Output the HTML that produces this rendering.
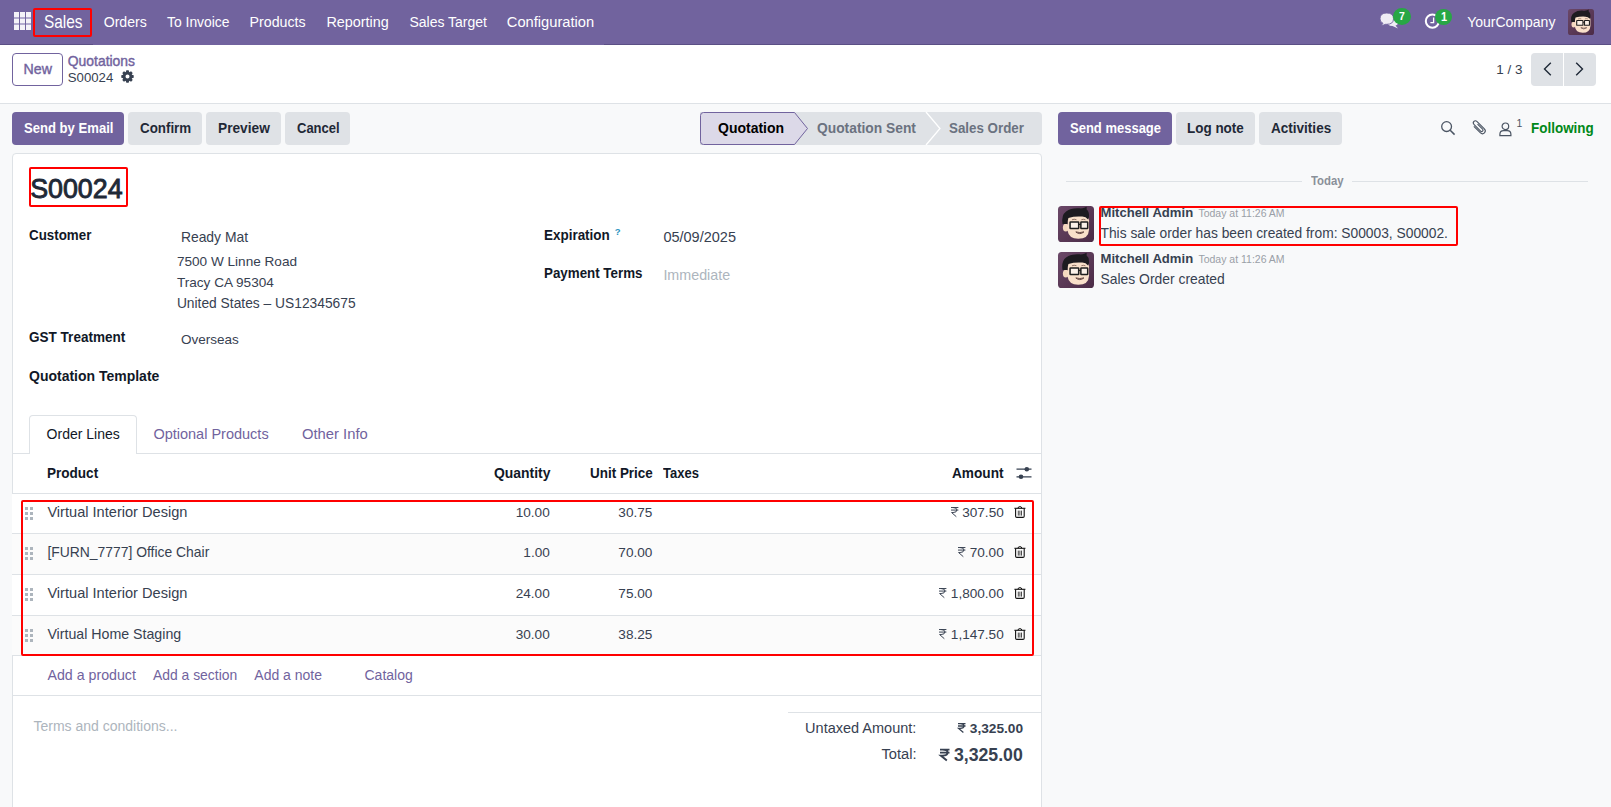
<!DOCTYPE html>
<html><head><meta charset="utf-8"><style>
html,body{margin:0;padding:0;width:1611px;height:807px;overflow:hidden;background:#f8f9fa}
body{position:relative;font-family:"Liberation Sans",sans-serif}
.t{position:absolute;white-space:nowrap}
.b{position:absolute}
svg{position:absolute;overflow:visible}
</style></head><body>
<div class="b" style="left:0px;top:0px;width:1611px;height:45px;background:#71639e"></div>
<div class="b" style="left:0px;top:44px;width:93px;height:1px;background:#5b4f85"></div>
<div class="b" style="left:604px;top:44px;width:1007px;height:1px;background:#5b4f85"></div>
<div class="b" style="left:0px;top:45px;width:1611px;height:58px;background:#fff"></div>
<div class="b" style="left:0px;top:103px;width:1611px;height:1px;background:#dee2e6"></div>
<div class="b" style="left:0px;top:104px;width:1611px;height:703px;background:#f8f9fa"></div>
<div class="b" style="left:12px;top:153px;width:1030px;height:700px;background:#fff;border:1px solid #dee2e6;border-radius:4px;box-sizing:border-box"></div>
<div class="b" style="left:14px;top:12px;width:5px;height:18px;background:#b3abcf"></div>
<div class="b" style="left:14px;top:12px;width:5px;height:5px;background:#f4f2f8"></div>
<div class="b" style="left:14px;top:18.6px;width:5px;height:4.8px;background:#f4f2f8"></div>
<div class="b" style="left:14px;top:24.8px;width:5px;height:5px;background:#f4f2f8"></div>
<div class="b" style="left:20px;top:12px;width:5px;height:18px;background:#b3abcf"></div>
<div class="b" style="left:20px;top:12px;width:5px;height:5px;background:#f4f2f8"></div>
<div class="b" style="left:20px;top:18.6px;width:5px;height:4.8px;background:#f4f2f8"></div>
<div class="b" style="left:20px;top:24.8px;width:5px;height:5px;background:#f4f2f8"></div>
<div class="b" style="left:26px;top:12px;width:5px;height:18px;background:#b3abcf"></div>
<div class="b" style="left:26px;top:12px;width:5px;height:5px;background:#f4f2f8"></div>
<div class="b" style="left:26px;top:18.6px;width:5px;height:4.8px;background:#f4f2f8"></div>
<div class="b" style="left:26px;top:24.8px;width:5px;height:5px;background:#f4f2f8"></div>
<div class="b" style="left:33px;top:8px;width:59px;height:29px;border:2px solid #ff0000;border-radius:2px;box-sizing:border-box"></div>
<div class="t" style="left:43.50px;top:9.80px;font-size:18.5px;line-height:23px;font-weight:400;color:#ffffff;transform:scaleX(0.8333);transform-origin:0 0;">Sales</div>
<div class="t" style="left:103.70px;top:12.70px;font-size:14.1px;line-height:18px;font-weight:400;color:#ffffff;">Orders</div>
<div class="t" style="left:167.00px;top:13.70px;font-size:13.9px;line-height:17px;font-weight:400;color:#ffffff;">To Invoice</div>
<div class="t" style="left:249.60px;top:12.70px;font-size:14.2px;line-height:18px;font-weight:400;color:#ffffff;">Products</div>
<div class="t" style="left:326.40px;top:12.70px;font-size:14.4px;line-height:18px;font-weight:400;color:#ffffff;">Reporting</div>
<div class="t" style="left:409.40px;top:12.60px;font-size:14.0px;line-height:18px;font-weight:400;color:#ffffff;">Sales Target</div>
<div class="t" style="left:506.80px;top:12.60px;font-size:14.7px;line-height:18px;font-weight:400;color:#ffffff;">Configuration</div>
<div class="t" style="left:1467.20px;top:12.90px;font-size:14.0px;line-height:18px;font-weight:400;color:#ffffff;">YourCompany</div>
<svg style="left:1376px;top:8px" width="26" height="24" viewBox="0 0 26 24"><path d="M11 13 Q11 9.5 16.5 9.5 Q22.5 9.5 22.5 13.5 Q22.5 16.5 19.5 17.5 L22 20.5 L16.5 18 Q11 18 11 13Z" fill="#efedf4"/><path d="M4 10.8 Q4 5 10.8 5 Q17.5 5 17.5 10.8 Q17.5 16.3 10.8 16.3 L9.5 16.3 L5 18 L7 15.3 Q4 14 4 10.8Z" fill="#efedf4" stroke="#71639e" stroke-width="0.9"/></svg>
<div class="b" style="left:1392.6px;top:7.7px;width:18.8px;height:17.4px;background:#28a745;border-radius:9.4px/8.7px"></div>
<div class="t" style="left:1399.00px;top:9.10px;font-size:11.5px;line-height:14px;font-weight:700;color:#ffffff;transform:scaleX(0.9091);transform-origin:0 0;">7</div>
<svg style="left:1422px;top:11px" width="20" height="20" viewBox="0 0 20 20"><circle cx="10.4" cy="10.1" r="6.6" fill="none" stroke="#fff" stroke-width="2"/><path d="M11.6 6.6 V11.6 H8.4" fill="none" stroke="#fff" stroke-width="1.3"/></svg>
<div class="b" style="left:1435.1px;top:9px;width:17.1px;height:16.4px;background:#28a745;border-radius:8.6px/8.2px"></div>
<div class="t" style="left:1441.30px;top:9.60px;font-size:12.1px;line-height:15px;font-weight:700;color:#ffffff;transform:scaleX(0.9091);transform-origin:0 0;">1</div>
<div class="b" style="left:12px;top:53px;width:51px;height:33px;border:1px solid #71639e;border-radius:4px;box-sizing:border-box;background:#fff"></div>
<div class="t" style="left:23.50px;top:59.60px;font-size:14.2px;line-height:18px;font-weight:400;color:#71639e;-webkit-text-stroke:0.4px #71639e;">New</div>
<div class="t" style="left:67.80px;top:53.00px;font-size:13.9px;line-height:17px;font-weight:400;color:#71639e;-webkit-text-stroke:0.4px #71639e;">Quotations</div>
<div class="t" style="left:67.80px;top:69.80px;font-size:13.2px;line-height:16px;font-weight:400;color:#374151;">S00024</div>
<svg style="left:120.6px;top:70.3px" width="13" height="13" viewBox="0 0 13 13"><path fill-rule="evenodd" fill="#374151" d="M10.88 4.79 L12.70 5.36 L12.70 7.64 L10.88 8.21 L10.80 8.39 L11.69 10.07 L10.07 11.69 L8.39 10.80 L8.21 10.88 L7.64 12.70 L5.36 12.70 L4.79 10.88 L4.61 10.80 L2.93 11.69 L1.31 10.07 L2.20 8.39 L2.12 8.21 L0.30 7.64 L0.30 5.36 L2.12 4.79 L2.20 4.61 L1.31 2.93 L2.93 1.31 L4.61 2.20 L4.79 2.12 L5.36 0.30 L7.64 0.30 L8.21 2.12 L8.39 2.20 L10.07 1.31 L11.69 2.93 L10.80 4.61Z M8.50 6.50 A2.0 2.0 0 1 0 4.50 6.50 A2.0 2.0 0 1 0 8.50 6.50Z"/></svg>
<div class="t" style="left:1496.30px;top:61.00px;font-size:13.4px;line-height:17px;font-weight:400;color:#374151;">1 / 3</div>
<div class="b" style="left:1531px;top:53px;width:32px;height:33px;background:#dfe2e6;border-radius:4px 0 0 4px"></div>
<div class="b" style="left:1564px;top:53px;width:32px;height:33px;background:#dfe2e6;border-radius:0 4px 4px 0"></div>
<svg style="left:1543px;top:62px" width="9" height="14" viewBox="0 0 9 14"><path d="M7.8 0.8 L1.5 7 L7.8 13.2" fill="none" stroke="#1f2937" stroke-width="1.4"/></svg>
<svg style="left:1575px;top:62px" width="9" height="14" viewBox="0 0 9 14"><path d="M1.2 0.8 L7.5 7 L1.2 13.2" fill="none" stroke="#1f2937" stroke-width="1.4"/></svg>
<div class="b" style="left:12px;top:112px;width:112px;height:33px;background:#71639e;border-radius:4px"></div>
<div class="t" style="left:23.50px;top:119.10px;font-size:14.4px;line-height:18px;font-weight:700;color:#ffffff;transform:scaleX(0.9091);transform-origin:0 0;">Send by Email</div>
<div class="b" style="left:128px;top:112px;width:74px;height:33px;background:#dfe2e6;border-radius:4px"></div>
<div class="t" style="left:139.70px;top:119.10px;font-size:14.7px;line-height:18px;font-weight:700;color:#1f2937;transform:scaleX(0.9091);transform-origin:0 0;">Confirm</div>
<div class="b" style="left:206px;top:112px;width:75px;height:33px;background:#dfe2e6;border-radius:4px"></div>
<div class="t" style="left:217.90px;top:118.10px;font-size:15.1px;line-height:19px;font-weight:700;color:#1f2937;transform:scaleX(0.9091);transform-origin:0 0;">Preview</div>
<div class="b" style="left:285px;top:112px;width:65px;height:33px;background:#dfe2e6;border-radius:4px"></div>
<div class="t" style="left:296.50px;top:119.10px;font-size:14.3px;line-height:18px;font-weight:700;color:#1f2937;transform:scaleX(0.9091);transform-origin:0 0;">Cancel</div>
<svg style="left:700px;top:112px" width="342" height="33" viewBox="0 0 342 33"><path d="M0 0 H338 Q342 0 342 4 V29 Q342 33 338 33 H0Z" fill="#dfe2e6"/><path d="M0.5 3.5 Q0.5 0.5 3.5 0.5 H94.5 L107.5 16.5 L94.5 32.5 H3.5 Q0.5 32.5 0.5 29.5Z" fill="#dcd9e8" stroke="#71639e" stroke-width="1"/><path d="M226 0 L240 16.5 L226 33" fill="none" stroke="#fff" stroke-width="1.3"/></svg>
<div class="t" style="left:717.70px;top:117.50px;font-size:15.4px;line-height:19px;font-weight:700;color:#000;transform:scaleX(0.9091);transform-origin:0 0;">Quotation</div>
<div class="t" style="left:817.00px;top:117.50px;font-size:15.2px;line-height:19px;font-weight:700;color:#6b7280;transform:scaleX(0.9091);transform-origin:0 0;">Quotation Sent</div>
<div class="t" style="left:949.00px;top:118.50px;font-size:14.7px;line-height:18px;font-weight:700;color:#6b7280;transform:scaleX(0.9091);transform-origin:0 0;">Sales Order</div>
<div class="b" style="left:1058px;top:112px;width:114px;height:33px;background:#71639e;border-radius:4px"></div>
<div class="t" style="left:1069.60px;top:119.10px;font-size:14.3px;line-height:18px;font-weight:700;color:#ffffff;transform:scaleX(0.9091);transform-origin:0 0;">Send message</div>
<div class="b" style="left:1176px;top:112px;width:79px;height:33px;background:#dfe2e6;border-radius:4px"></div>
<div class="t" style="left:1187.40px;top:119.10px;font-size:14.8px;line-height:18px;font-weight:700;color:#1f2937;transform:scaleX(0.9091);transform-origin:0 0;">Log note</div>
<div class="b" style="left:1259px;top:112px;width:83px;height:33px;background:#dfe2e6;border-radius:4px"></div>
<div class="t" style="left:1271.00px;top:119.10px;font-size:14.9px;line-height:19px;font-weight:700;color:#1f2937;transform:scaleX(0.9091);transform-origin:0 0;">Activities</div>
<svg style="left:1440px;top:120px" width="16" height="16" viewBox="0 0 16 16"><circle cx="6.6" cy="6.6" r="4.9" fill="none" stroke="#4b5563" stroke-width="1.3"/><path d="M10.2 10.2 L14.6 14.6" stroke="#4b5563" stroke-width="1.5"/></svg>
<svg style="left:1470px;top:118px" width="18" height="19" viewBox="0 0 18 19"><g transform="rotate(-45 9 9.5)"><path d="M6.2 5 V14 Q6.2 17.2 9 17.2 Q11.8 17.2 11.8 14 V4 Q11.8 1.6 9.6 1.6 Q7.6 1.6 7.6 4 V13.2 Q7.6 14.6 9 14.6 Q10.4 14.6 10.4 13.2 V6" fill="none" stroke="#4b5563" stroke-width="1.1"/></g></svg>
<svg style="left:1499px;top:122px" width="14" height="15" viewBox="0 0 14 15"><circle cx="6.4" cy="4.3" r="3.3" fill="none" stroke="#4b5563" stroke-width="1.2"/><path d="M0.9 13.6 V12.3 Q0.9 8.6 4.6 8.6 H8.2 Q11.9 8.6 11.9 12.3 V13.6 Z" fill="none" stroke="#4b5563" stroke-width="1.2"/></svg>
<div class="t" style="left:1516.40px;top:116.90px;font-size:10.5px;line-height:13px;font-weight:400;color:#4b5563;">1</div>
<div class="t" style="left:1531.40px;top:119.10px;font-size:14.8px;line-height:18px;font-weight:700;color:#008818;transform:scaleX(0.9091);transform-origin:0 0;">Following</div>
<div class="b" style="left:29px;top:167px;width:99px;height:40px;border:2px solid #ff0000;border-radius:2px;box-sizing:border-box"></div>
<div class="t" style="left:30.20px;top:171.50px;font-size:26.8px;line-height:34px;font-weight:400;color:#1f2937;-webkit-text-stroke:0.9px #1f2937;">S00024</div>
<div class="t" style="left:29.40px;top:226.00px;font-size:14.7px;line-height:18px;font-weight:700;color:#111827;transform:scaleX(0.9091);transform-origin:0 0;">Customer</div>
<div class="t" style="left:180.90px;top:229.30px;font-size:13.9px;line-height:17px;font-weight:400;color:#374151;">Ready Mat</div>
<div class="t" style="left:176.90px;top:252.80px;font-size:13.6px;line-height:17px;font-weight:400;color:#374151;">7500 W Linne Road</div>
<div class="t" style="left:176.90px;top:274.00px;font-size:13.6px;line-height:17px;font-weight:400;color:#374151;">Tracy CA 95304</div>
<div class="t" style="left:176.90px;top:294.60px;font-size:13.8px;line-height:17px;font-weight:400;color:#374151;">United States – US12345675</div>
<div class="t" style="left:29.40px;top:327.80px;font-size:14.9px;line-height:19px;font-weight:700;color:#111827;transform:scaleX(0.9091);transform-origin:0 0;">GST Treatment</div>
<div class="t" style="left:180.90px;top:330.60px;font-size:13.5px;line-height:17px;font-weight:400;color:#374151;">Overseas</div>
<div class="t" style="left:29.40px;top:365.90px;font-size:15.4px;line-height:19px;font-weight:700;color:#111827;transform:scaleX(0.9091);transform-origin:0 0;">Quotation Template</div>
<div class="t" style="left:543.60px;top:225.70px;font-size:14.8px;line-height:18px;font-weight:700;color:#111827;transform:scaleX(0.9091);transform-origin:0 0;">Expiration</div>
<div class="t" style="left:614.70px;top:225.90px;font-size:9.5px;line-height:12px;font-weight:700;color:#2a93c0;">?</div>
<div class="t" style="left:663.40px;top:228.00px;font-size:14.5px;line-height:18px;font-weight:400;color:#374151;">05/09/2025</div>
<div class="t" style="left:543.60px;top:264.40px;font-size:14.7px;line-height:18px;font-weight:700;color:#111827;transform:scaleX(0.9091);transform-origin:0 0;">Payment Terms</div>
<div class="t" style="left:663.40px;top:266.30px;font-size:14.3px;line-height:18px;font-weight:400;color:#adb5bd;">Immediate</div>
<div class="b" style="left:12px;top:453px;width:1029px;height:1px;background:#dee2e6"></div>
<div class="b" style="left:29px;top:415px;width:108px;height:39px;background:#fff;border:1px solid #dee2e6;border-bottom:none;border-radius:4px 4px 0 0;box-sizing:border-box"></div>
<div class="t" style="left:46.60px;top:425.20px;font-size:14.0px;line-height:18px;font-weight:400;color:#111827;">Order Lines</div>
<div class="t" style="left:153.40px;top:425.20px;font-size:14.5px;line-height:18px;font-weight:400;color:#71639e;">Optional Products</div>
<div class="t" style="left:302.00px;top:425.20px;font-size:14.8px;line-height:18px;font-weight:400;color:#71639e;">Other Info</div>
<div class="t" style="left:47.30px;top:463.60px;font-size:14.9px;line-height:19px;font-weight:700;color:#111827;transform:scaleX(0.9091);transform-origin:0 0;">Product</div>
<div class="t" style="left:493.50px;top:462.60px;font-size:15.3px;line-height:19px;font-weight:700;color:#111827;transform:scaleX(0.9091);transform-origin:0 0;">Quantity</div>
<div class="t" style="left:589.50px;top:463.60px;font-size:14.8px;line-height:18px;font-weight:700;color:#111827;transform:scaleX(0.9091);transform-origin:0 0;">Unit Price</div>
<div class="t" style="left:662.80px;top:463.60px;font-size:14.3px;line-height:18px;font-weight:700;color:#111827;transform:scaleX(0.9091);transform-origin:0 0;">Taxes</div>
<div class="t" style="left:952.20px;top:462.70px;font-size:15.0px;line-height:19px;font-weight:700;color:#111827;transform:scaleX(0.9091);transform-origin:0 0;">Amount</div>
<svg style="left:1016px;top:466px" width="16" height="14" viewBox="0 0 16 14"><path d="M0.5 3.2 H15.5 M0.5 10.8 H15.5" stroke="#374151" stroke-width="1.2"/><circle cx="10.8" cy="3.2" r="2.3" fill="#374151"/><circle cx="5" cy="10.8" r="2.3" fill="#374151"/></svg>
<div class="b" style="left:12px;top:493px;width:1029px;height:1px;background:#dee2e6"></div>
<div class="b" style="left:12px;top:494px;width:1029px;height:39px;background:#fff"></div>
<div class="b" style="left:12px;top:533px;width:1029px;height:1px;background:#dee2e6"></div>
<div class="b" style="left:25px;top:506.79999999999995px;width:3px;height:3px;background:#adb5bd"></div>
<div class="b" style="left:25px;top:511.79999999999995px;width:3px;height:3px;background:#adb5bd"></div>
<div class="b" style="left:25px;top:516.8px;width:3px;height:3px;background:#adb5bd"></div>
<div class="b" style="left:30px;top:506.79999999999995px;width:3px;height:3px;background:#adb5bd"></div>
<div class="b" style="left:30px;top:511.79999999999995px;width:3px;height:3px;background:#adb5bd"></div>
<div class="b" style="left:30px;top:516.8px;width:3px;height:3px;background:#adb5bd"></div>
<div class="t" style="left:47.40px;top:502.80px;font-size:14.6px;line-height:18px;font-weight:400;color:#374151;">Virtual Interior Design</div>
<div class="t" style="left:515.73px;top:503.80px;font-size:13.6px;line-height:17px;font-weight:400;color:#374151;">10.00</div>
<div class="t" style="left:618.33px;top:503.80px;font-size:13.6px;line-height:17px;font-weight:400;color:#374151;">30.75</div>
<div class="t" style="left:962.18px;top:503.80px;font-size:13.6px;line-height:17px;font-weight:400;color:#374151;">307.50</div>
<svg style="left:1013.5px;top:505.99999999999994px" width="12" height="12" viewBox="0 0 12 12"><path d="M0.4 2.3 H11.4" stroke="#111" stroke-width="1.1"/><path d="M4 2.2 Q4 0.6 5.9 0.6 Q7.8 0.6 7.8 2.2" fill="none" stroke="#111" stroke-width="1"/><path d="M1.6 2.6 V10.2 Q1.6 11.4 2.8 11.4 H9 Q10.2 11.4 10.2 10.2 V2.6" fill="none" stroke="#111" stroke-width="1.1"/><path d="M4.3 4.6 V9.6 M5.9 4.6 V9.6 M7.5 4.6 V9.6" stroke="#111" stroke-width="0.75"/></svg>
<div class="b" style="left:12px;top:534px;width:1029px;height:40px;background:#fbfbfb"></div>
<div class="b" style="left:12px;top:574px;width:1029px;height:1px;background:#dee2e6"></div>
<div class="b" style="left:25px;top:546.5px;width:3px;height:3px;background:#adb5bd"></div>
<div class="b" style="left:25px;top:551.5px;width:3px;height:3px;background:#adb5bd"></div>
<div class="b" style="left:25px;top:556.5px;width:3px;height:3px;background:#adb5bd"></div>
<div class="b" style="left:30px;top:546.5px;width:3px;height:3px;background:#adb5bd"></div>
<div class="b" style="left:30px;top:551.5px;width:3px;height:3px;background:#adb5bd"></div>
<div class="b" style="left:30px;top:556.5px;width:3px;height:3px;background:#adb5bd"></div>
<div class="t" style="left:47.40px;top:543.50px;font-size:13.9px;line-height:17px;font-weight:400;color:#374151;">[FURN_7777] Office Chair</div>
<div class="t" style="left:523.35px;top:543.50px;font-size:13.6px;line-height:17px;font-weight:400;color:#374151;">1.00</div>
<div class="t" style="left:618.33px;top:543.50px;font-size:13.6px;line-height:17px;font-weight:400;color:#374151;">70.00</div>
<div class="t" style="left:969.73px;top:543.50px;font-size:13.6px;line-height:17px;font-weight:400;color:#374151;">70.00</div>
<svg style="left:1013.5px;top:545.7px" width="12" height="12" viewBox="0 0 12 12"><path d="M0.4 2.3 H11.4" stroke="#111" stroke-width="1.1"/><path d="M4 2.2 Q4 0.6 5.9 0.6 Q7.8 0.6 7.8 2.2" fill="none" stroke="#111" stroke-width="1"/><path d="M1.6 2.6 V10.2 Q1.6 11.4 2.8 11.4 H9 Q10.2 11.4 10.2 10.2 V2.6" fill="none" stroke="#111" stroke-width="1.1"/><path d="M4.3 4.6 V9.6 M5.9 4.6 V9.6 M7.5 4.6 V9.6" stroke="#111" stroke-width="0.75"/></svg>
<div class="b" style="left:12px;top:575px;width:1029px;height:40px;background:#fff"></div>
<div class="b" style="left:12px;top:615px;width:1029px;height:1px;background:#dee2e6"></div>
<div class="b" style="left:25px;top:587.5px;width:3px;height:3px;background:#adb5bd"></div>
<div class="b" style="left:25px;top:592.5px;width:3px;height:3px;background:#adb5bd"></div>
<div class="b" style="left:25px;top:597.5px;width:3px;height:3px;background:#adb5bd"></div>
<div class="b" style="left:30px;top:587.5px;width:3px;height:3px;background:#adb5bd"></div>
<div class="b" style="left:30px;top:592.5px;width:3px;height:3px;background:#adb5bd"></div>
<div class="b" style="left:30px;top:597.5px;width:3px;height:3px;background:#adb5bd"></div>
<div class="t" style="left:47.40px;top:583.50px;font-size:14.6px;line-height:18px;font-weight:400;color:#374151;">Virtual Interior Design</div>
<div class="t" style="left:515.73px;top:584.50px;font-size:13.6px;line-height:17px;font-weight:400;color:#374151;">24.00</div>
<div class="t" style="left:618.33px;top:584.50px;font-size:13.6px;line-height:17px;font-weight:400;color:#374151;">75.00</div>
<div class="t" style="left:950.83px;top:584.50px;font-size:13.6px;line-height:17px;font-weight:400;color:#374151;">1,800.00</div>
<svg style="left:1013.5px;top:586.7px" width="12" height="12" viewBox="0 0 12 12"><path d="M0.4 2.3 H11.4" stroke="#111" stroke-width="1.1"/><path d="M4 2.2 Q4 0.6 5.9 0.6 Q7.8 0.6 7.8 2.2" fill="none" stroke="#111" stroke-width="1"/><path d="M1.6 2.6 V10.2 Q1.6 11.4 2.8 11.4 H9 Q10.2 11.4 10.2 10.2 V2.6" fill="none" stroke="#111" stroke-width="1.1"/><path d="M4.3 4.6 V9.6 M5.9 4.6 V9.6 M7.5 4.6 V9.6" stroke="#111" stroke-width="0.75"/></svg>
<div class="b" style="left:12px;top:616px;width:1029px;height:39px;background:#fbfbfb"></div>
<div class="b" style="left:12px;top:655px;width:1029px;height:1px;background:#dee2e6"></div>
<div class="b" style="left:25px;top:628.9px;width:3px;height:3px;background:#adb5bd"></div>
<div class="b" style="left:25px;top:633.9px;width:3px;height:3px;background:#adb5bd"></div>
<div class="b" style="left:25px;top:638.9px;width:3px;height:3px;background:#adb5bd"></div>
<div class="b" style="left:30px;top:628.9px;width:3px;height:3px;background:#adb5bd"></div>
<div class="b" style="left:30px;top:633.9px;width:3px;height:3px;background:#adb5bd"></div>
<div class="b" style="left:30px;top:638.9px;width:3px;height:3px;background:#adb5bd"></div>
<div class="t" style="left:47.40px;top:624.90px;font-size:14.2px;line-height:18px;font-weight:400;color:#374151;">Virtual Home Staging</div>
<div class="t" style="left:515.73px;top:625.90px;font-size:13.6px;line-height:17px;font-weight:400;color:#374151;">30.00</div>
<div class="t" style="left:618.33px;top:625.90px;font-size:13.6px;line-height:17px;font-weight:400;color:#374151;">38.25</div>
<div class="t" style="left:950.83px;top:625.90px;font-size:13.6px;line-height:17px;font-weight:400;color:#374151;">1,147.50</div>
<svg style="left:1013.5px;top:628.1px" width="12" height="12" viewBox="0 0 12 12"><path d="M0.4 2.3 H11.4" stroke="#111" stroke-width="1.1"/><path d="M4 2.2 Q4 0.6 5.9 0.6 Q7.8 0.6 7.8 2.2" fill="none" stroke="#111" stroke-width="1"/><path d="M1.6 2.6 V10.2 Q1.6 11.4 2.8 11.4 H9 Q10.2 11.4 10.2 10.2 V2.6" fill="none" stroke="#111" stroke-width="1.1"/><path d="M4.3 4.6 V9.6 M5.9 4.6 V9.6 M7.5 4.6 V9.6" stroke="#111" stroke-width="0.75"/></svg>
<div class="b" style="left:21px;top:500px;width:1013px;height:156px;border:2px solid #ff0000;border-radius:2px;box-sizing:border-box"></div>
<div class="t" style="left:47.50px;top:666.00px;font-size:14.2px;line-height:18px;font-weight:400;color:#71639e;">Add a product</div>
<div class="t" style="left:153.00px;top:667.00px;font-size:13.9px;line-height:17px;font-weight:400;color:#71639e;">Add a section</div>
<div class="t" style="left:254.30px;top:666.00px;font-size:14.0px;line-height:18px;font-weight:400;color:#71639e;">Add a note</div>
<div class="t" style="left:364.50px;top:666.00px;font-size:14.0px;line-height:18px;font-weight:400;color:#71639e;">Catalog</div>
<div class="b" style="left:12px;top:695px;width:1029px;height:1px;background:#dee2e6"></div>
<div class="t" style="left:33.50px;top:716.80px;font-size:14.0px;line-height:18px;font-weight:400;color:#adb5bd;">Terms and conditions...</div>
<div class="b" style="left:788px;top:712px;width:253px;height:1px;background:#dee2e6"></div>
<div class="t" style="left:805.10px;top:718.70px;font-size:14.5px;line-height:18px;font-weight:400;color:#374151;">Untaxed Amount:</div>
<div class="t" style="left:969.80px;top:719.90px;font-size:13.7px;line-height:17px;font-weight:700;color:#374151;">3,325.00</div>
<div class="t" style="left:881.40px;top:744.70px;font-size:14.7px;line-height:18px;font-weight:400;color:#374151;">Total:</div>
<div class="t" style="left:953.90px;top:743.70px;font-size:17.7px;line-height:22px;font-weight:700;color:#374151;">3,325.00</div>
<div class="b" style="left:1066px;top:181px;width:236px;height:1px;background:#dee2e6"></div>
<div class="b" style="left:1352px;top:181px;width:236px;height:1px;background:#dee2e6"></div>
<div class="t" style="left:1310.80px;top:173.10px;font-size:12.5px;line-height:16px;font-weight:700;color:#8a9099;transform:scaleX(0.9091);transform-origin:0 0;">Today</div>
<div class="b" style="left:1099px;top:206px;width:359px;height:40px;border:2px solid #ff0000;border-radius:2px;box-sizing:border-box"></div>
<div class="t" style="left:1100.50px;top:205.00px;font-size:13.1px;line-height:16px;font-weight:700;color:#374151;">Mitchell Admin</div>
<div class="t" style="left:1198.40px;top:206.70px;font-size:10.5px;line-height:13px;font-weight:400;color:#9a9fa7;">Today at 11:26 AM</div>
<div class="t" style="left:1100.50px;top:224.50px;font-size:13.8px;line-height:17px;font-weight:400;color:#374151;">This sale order has been created from: S00003, S00002.</div>
<div class="t" style="left:1100.50px;top:251.00px;font-size:13.1px;line-height:16px;font-weight:700;color:#374151;">Mitchell Admin</div>
<div class="t" style="left:1198.40px;top:252.70px;font-size:10.5px;line-height:13px;font-weight:400;color:#9a9fa7;">Today at 11:26 AM</div>
<div class="t" style="left:1100.50px;top:270.80px;font-size:13.9px;line-height:17px;font-weight:400;color:#374151;">Sales Order created</div>
<svg style="left:1568px;top:9px" width="26" height="26" viewBox="0 0 40 40"><defs><linearGradient id="ag15689" x1="0" y1="0" x2="1" y2="1"><stop offset="0" stop-color="#6b4868"/><stop offset="1" stop-color="#4b2b46"/></linearGradient></defs><rect x="0" y="0" width="40" height="40" rx="4" fill="url(#ag15689)"/><ellipse cx="8.6" cy="24" rx="3.2" ry="4.4" fill="#f4d8bf"/><path d="M10.5 13 Q10.5 9 22 9 Q34.5 9 34.5 16 L34.5 26 Q34 36.5 22.5 36.5 Q12 36.5 10.5 27 Z" fill="#f9e0ca"/><path d="M5 20 Q3.5 10 9 6 Q15 1.8 24 2.6 Q27 2.8 29.3 2 L31.8 0.8 L31.8 4 Q35.2 6.5 34.3 13 L33.4 15 Q31 11.8 27 11.8 Q18.5 11.2 11.6 13.2 Q10.6 16 10.6 20 Z" fill="#1d1b20"/><rect x="13.4" y="17.8" width="9.6" height="7.3" rx="0.6" fill="#fbf1e8" stroke="#1f1f1f" stroke-width="1.7"/><rect x="25.4" y="17.8" width="7.6" height="7.3" rx="0.6" fill="#fbf1e8" stroke="#1f1f1f" stroke-width="1.7"/><path d="M23 20.5 H25.4" stroke="#1f1f1f" stroke-width="1.3"/><path d="M15.5 15.3 Q18 14.2 20.5 15.2 M26 15.2 Q28.3 14.3 30.5 15.3" stroke="#7a5c50" stroke-width="0.9" fill="none"/><path d="M19.8 28.8 Q24.2 32.6 28.8 28.8 Q24.2 30.2 19.8 28.8Z" fill="#fff" stroke="#5a3a34" stroke-width="1"/></svg>
<svg style="left:1058px;top:206px" width="36" height="36" viewBox="0 0 40 40"><defs><linearGradient id="ag1058206" x1="0" y1="0" x2="1" y2="1"><stop offset="0" stop-color="#6b4868"/><stop offset="1" stop-color="#4b2b46"/></linearGradient></defs><rect x="0" y="0" width="40" height="40" rx="4" fill="url(#ag1058206)"/><ellipse cx="8.6" cy="24" rx="3.2" ry="4.4" fill="#f4d8bf"/><path d="M10.5 13 Q10.5 9 22 9 Q34.5 9 34.5 16 L34.5 26 Q34 36.5 22.5 36.5 Q12 36.5 10.5 27 Z" fill="#f9e0ca"/><path d="M5 20 Q3.5 10 9 6 Q15 1.8 24 2.6 Q27 2.8 29.3 2 L31.8 0.8 L31.8 4 Q35.2 6.5 34.3 13 L33.4 15 Q31 11.8 27 11.8 Q18.5 11.2 11.6 13.2 Q10.6 16 10.6 20 Z" fill="#1d1b20"/><rect x="13.4" y="17.8" width="9.6" height="7.3" rx="0.6" fill="#fbf1e8" stroke="#1f1f1f" stroke-width="1.7"/><rect x="25.4" y="17.8" width="7.6" height="7.3" rx="0.6" fill="#fbf1e8" stroke="#1f1f1f" stroke-width="1.7"/><path d="M23 20.5 H25.4" stroke="#1f1f1f" stroke-width="1.3"/><path d="M15.5 15.3 Q18 14.2 20.5 15.2 M26 15.2 Q28.3 14.3 30.5 15.3" stroke="#7a5c50" stroke-width="0.9" fill="none"/><path d="M19.8 28.8 Q24.2 32.6 28.8 28.8 Q24.2 30.2 19.8 28.8Z" fill="#fff" stroke="#5a3a34" stroke-width="1"/></svg>
<svg style="left:1058px;top:252px" width="36" height="36" viewBox="0 0 40 40"><defs><linearGradient id="ag1058252" x1="0" y1="0" x2="1" y2="1"><stop offset="0" stop-color="#6b4868"/><stop offset="1" stop-color="#4b2b46"/></linearGradient></defs><rect x="0" y="0" width="40" height="40" rx="4" fill="url(#ag1058252)"/><ellipse cx="8.6" cy="24" rx="3.2" ry="4.4" fill="#f4d8bf"/><path d="M10.5 13 Q10.5 9 22 9 Q34.5 9 34.5 16 L34.5 26 Q34 36.5 22.5 36.5 Q12 36.5 10.5 27 Z" fill="#f9e0ca"/><path d="M5 20 Q3.5 10 9 6 Q15 1.8 24 2.6 Q27 2.8 29.3 2 L31.8 0.8 L31.8 4 Q35.2 6.5 34.3 13 L33.4 15 Q31 11.8 27 11.8 Q18.5 11.2 11.6 13.2 Q10.6 16 10.6 20 Z" fill="#1d1b20"/><rect x="13.4" y="17.8" width="9.6" height="7.3" rx="0.6" fill="#fbf1e8" stroke="#1f1f1f" stroke-width="1.7"/><rect x="25.4" y="17.8" width="7.6" height="7.3" rx="0.6" fill="#fbf1e8" stroke="#1f1f1f" stroke-width="1.7"/><path d="M23 20.5 H25.4" stroke="#1f1f1f" stroke-width="1.3"/><path d="M15.5 15.3 Q18 14.2 20.5 15.2 M26 15.2 Q28.3 14.3 30.5 15.3" stroke="#7a5c50" stroke-width="0.9" fill="none"/><path d="M19.8 28.8 Q24.2 32.6 28.8 28.8 Q24.2 30.2 19.8 28.8Z" fill="#fff" stroke="#5a3a34" stroke-width="1"/></svg>
<svg style="left:950.6px;top:507.19999999999993px" width="7.4" height="10" viewBox="0 0 100 130" preserveAspectRatio="none"><path d="M0 7 H100 M0 40 H100 M28 7 Q80 7 80 38 Q80 72 28 72 H8 L72 126" fill="none" stroke="#374151" stroke-width="13"/></svg>
<svg style="left:958px;top:546.9px" width="7.4" height="10" viewBox="0 0 100 130" preserveAspectRatio="none"><path d="M0 7 H100 M0 40 H100 M28 7 Q80 7 80 38 Q80 72 28 72 H8 L72 126" fill="none" stroke="#374151" stroke-width="13"/></svg>
<svg style="left:939px;top:587.9px" width="7.4" height="10" viewBox="0 0 100 130" preserveAspectRatio="none"><path d="M0 7 H100 M0 40 H100 M28 7 Q80 7 80 38 Q80 72 28 72 H8 L72 126" fill="none" stroke="#374151" stroke-width="13"/></svg>
<svg style="left:939px;top:629.3px" width="7.4" height="10" viewBox="0 0 100 130" preserveAspectRatio="none"><path d="M0 7 H100 M0 40 H100 M28 7 Q80 7 80 38 Q80 72 28 72 H8 L72 126" fill="none" stroke="#374151" stroke-width="13"/></svg>
<svg style="left:958px;top:723px" width="7.5" height="9.8" viewBox="0 0 100 130" preserveAspectRatio="none"><path d="M0 7 H100 M0 40 H100 M28 7 Q80 7 80 38 Q80 72 28 72 H8 L72 126" fill="none" stroke="#374151" stroke-width="17"/></svg>
<svg style="left:939.5px;top:749px" width="9.5" height="11.8" viewBox="0 0 100 130" preserveAspectRatio="none"><path d="M0 7 H100 M0 40 H100 M28 7 Q80 7 80 38 Q80 72 28 72 H8 L72 126" fill="none" stroke="#374151" stroke-width="20"/></svg>
</body></html>
